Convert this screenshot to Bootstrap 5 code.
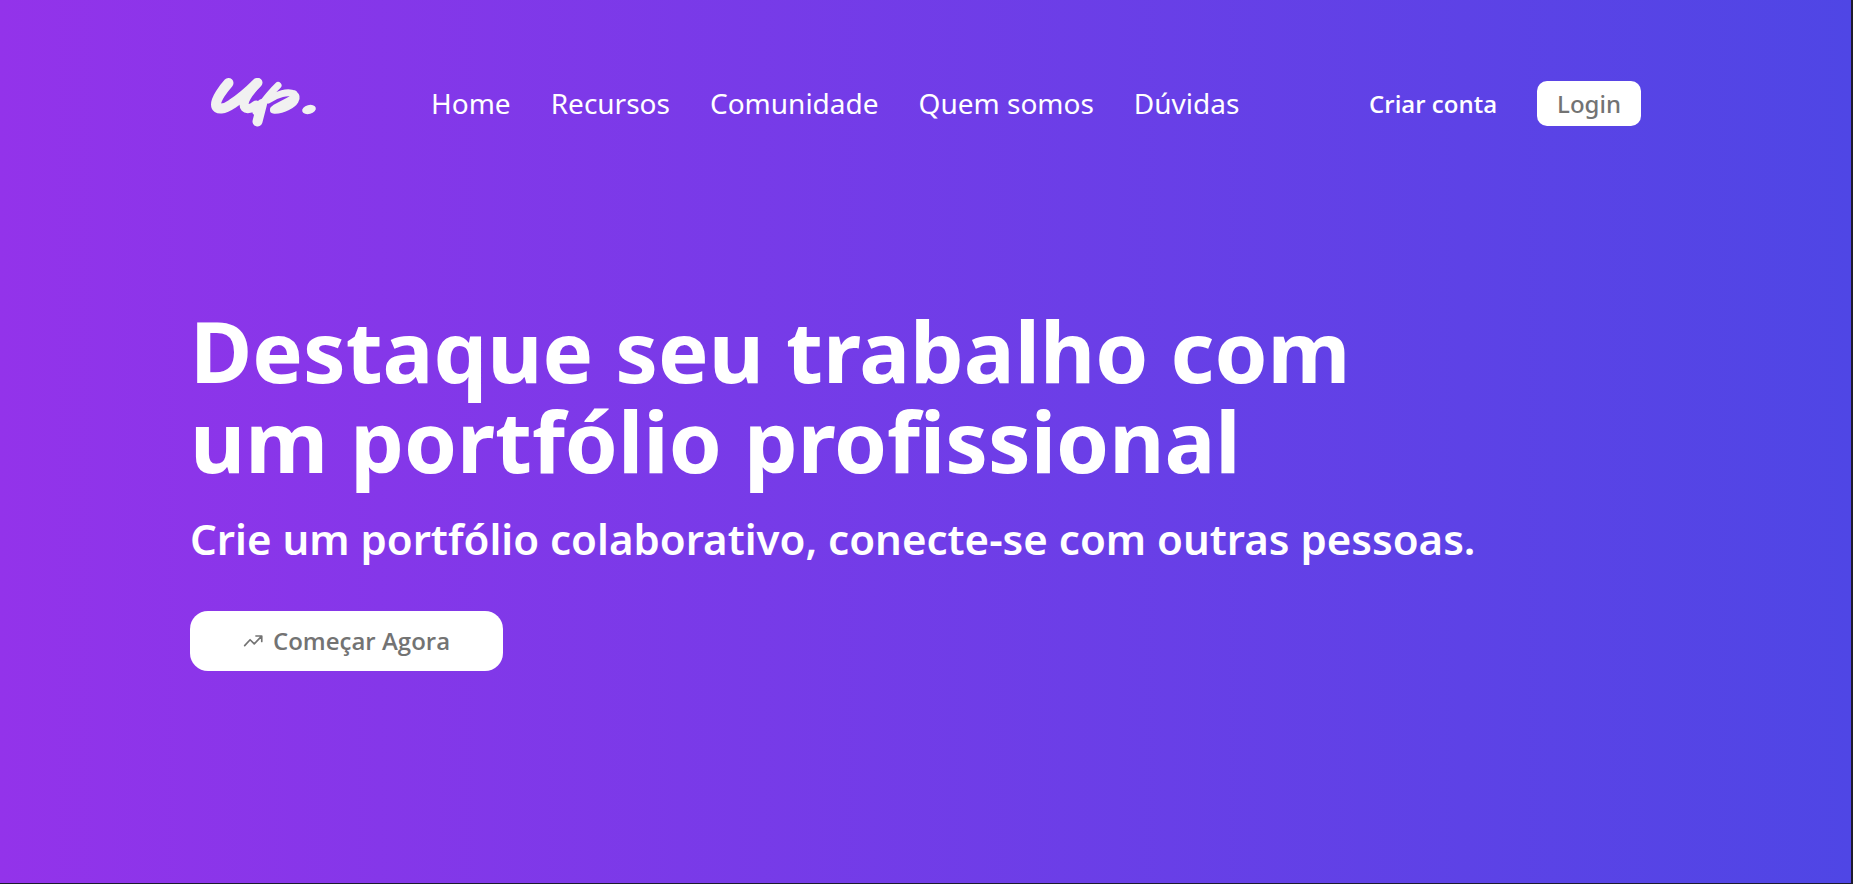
<!DOCTYPE html>
<html lang="pt-BR">
<head>
<meta charset="utf-8">
<meta name="viewport" content="width=device-width, initial-scale=1">
<title>Up. Portfólio profissional</title>
<link href="https://cdn.jsdelivr.net/npm/bootstrap@5.3.0/dist/css/bootstrap.min.css" rel="stylesheet">
<style>
  body {
    font-family: "Noto Sans", "Open Sans", sans-serif;
    background: #1e1b2e;
    color: #fff;
  }
  .landing {
    min-height: calc(100vh - 1px);
    margin-right: 2px;
    padding: 60px 0;
    background: linear-gradient(to right, #9333ea, #4f46e5);
  }
  .page-wrap { max-width: 1519px; padding: 0 24px; }
  .site-nav { padding: 0 20px; min-height: 86px; }
  .logo { width: 108px; height: 62px; }
  .menu { gap: 12px 40px; margin-left: 113px; }
  .menu a { color: #fff; font-size: 28px; line-height: 40px; text-decoration: none; }
  .account { gap: 40px; }
  .account button { font-size: 24px; line-height: 33px; }
  .btn-signup { border: 0; background: none; color: #fff; font-family: "Open Sans", sans-serif; font-weight: 600; padding: 0; }
  .btn-login { padding: 6px 20px; border: 0; border-radius: 10px; background: #fff; color: #737373; font-weight: 500; }
  .hero { padding-top: 159px; }
  .hero h1 { max-width: 1280px; margin: 0 0 27px; font-size: 85px; line-height: 90px; font-weight: 700; }
  .hero p { margin: 0 0 45px; font-size: 42px; line-height: 54px; font-weight: 600; }
  .btn-start { gap: 10px; min-width: 313px; min-height: 60px; border: 0; border-radius: 18px; background: #fff; color: #737373; font-family: "Open Sans", sans-serif; font-size: 24px; font-weight: 600; }
</style>
</head>
<body>
<div class="landing">
  <div class="page-wrap mx-auto">
    <header class="site-nav d-flex flex-wrap align-items-center">
      <a href="#" aria-label="Up. página inicial">
        <svg class="logo d-block" viewBox="20 12 108 62" fill="none" stroke="#f1f1f1" stroke-linecap="round" stroke-linejoin="round">
          <path stroke-width="10" d="M38.500 23C33 29 26 39 26 44.500C26 51 35 49 42 44C51 38 60 30 67 23"/>
          <path stroke-width="9" d="M68 22.500C61 30 54 39 54 44.500C54 50 60 50 66 45"/>
          <path stroke-width="7" d="M88 25.500C79 34 72 44 66 52"/>
          <path stroke-width="10" d="M72 44L67.500 61.500"/>
          <path stroke-width="7" d="M78 40C87 34 98 31 104 34C109 38 104 44 98 46.500C93 49 87 50.500 83.500 50"/>
          <path stroke-width="7" d="M104 34C106 40 92 43 84 49"/>
          <ellipse cx="119" cy="49.500" rx="7" ry="4.500" fill="#f1f1f1" stroke="none" transform="rotate(-15 119 49.500)"/>
        </svg>
      </a>
      <nav class="menu d-flex flex-wrap">
        <a href="#">Home</a>
        <a href="#">Recursos</a>
        <a href="#">Comunidade</a>
        <a href="#">Quem somos</a>
        <a href="#">Dúvidas</a>
      </nav>
      <div class="account d-flex align-items-center ms-auto">
        <button type="button" class="btn-signup">Criar conta</button>
        <button type="button" class="btn-login">Login</button>
      </div>
    </header>
    <main class="hero">
      <h1>Destaque seu trabalho com um portfólio profissional</h1>
      <p>Crie um portfólio colaborativo, conecte-se com outras pessoas.</p>
      <button type="button" class="btn-start d-inline-flex align-items-center justify-content-center">
        <svg width="20" height="20" viewBox="0 0 24 24" fill="none" stroke="currentColor" stroke-width="2" stroke-linecap="round" stroke-linejoin="round" aria-hidden="true">
          <path d="M2 17.500L8.500 10.500L13.500 15.500L22 6.500M15.500 6H22.500V12.500"/>
        </svg>
        Começar Agora
      </button>
    </main>
  </div>
</div>
<script src="https://cdn.jsdelivr.net/npm/bootstrap@5.3.0/dist/js/bootstrap.bundle.min.js"></script>
</body>
</html>
